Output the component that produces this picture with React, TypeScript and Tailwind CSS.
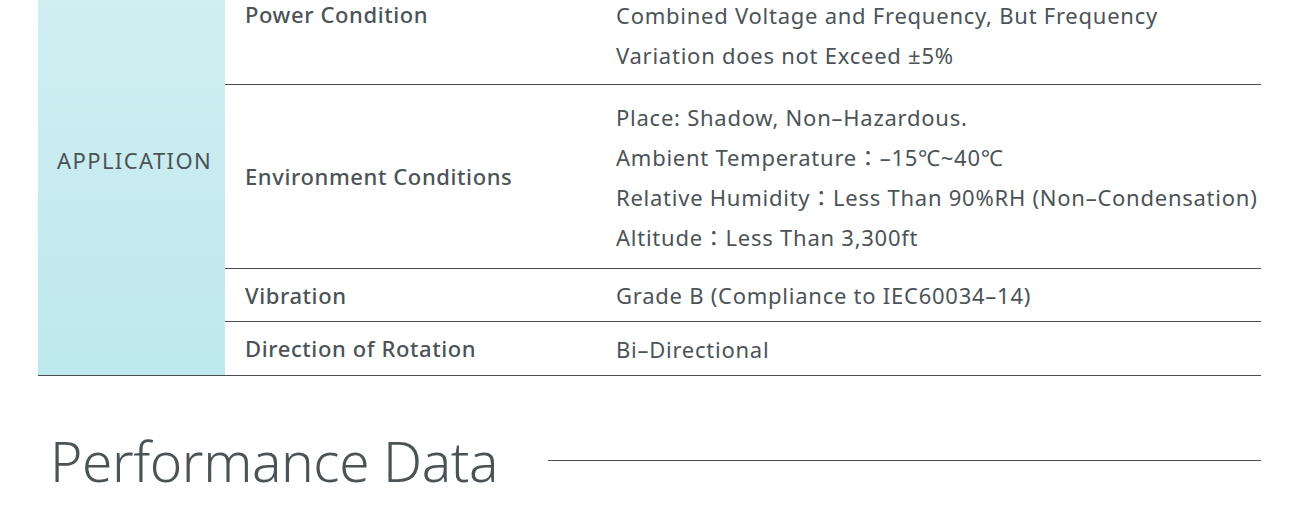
import React from 'react';

interface SpecRow {
    label: string;
    lines: string[];
    height: string;
    valuePad?: string;
    border?: boolean;
}

const rows: SpecRow[] = [
    {
        label: 'Power Condition',
        lines: ['Combined Voltage and Frequency, But Frequency', 'Variation does not Exceed ±5%'],
        height: 'h-[140px]',
        valuePad: 'pt-[50px] pb-[10px]',
        border: true,
    },
    {
        label: 'Environment Conditions',
        lines: [
            'Place: Shadow, Non–Hazardous.',
            'Ambient Temperature：–15℃~40℃',
            'Relative Humidity：Less Than 90%RH (Non–Condensation)',
            'Altitude：Less Than 3,300ft',
        ],
        height: 'h-[184px]',
        border: true,
    },
    {
        label: 'Vibration',
        lines: ['Grade B (Compliance to IEC60034–14)'],
        height: 'h-[53px]',
        border: true,
    },
    {
        label: 'Direction of Rotation',
        lines: ['Bi–Directional'],
        height: 'h-[53px]',
    },
];

export default function App() {
    return (
        <div
            className="w-full h-[513px] overflow-hidden bg-white text-[#4b5357]"
            style={{ fontFamily: '"Noto Sans", "Noto Sans CJK KR", sans-serif' }}
        >
            <div className="ml-[38px] w-[1223px] -mt-[55px] flex border-b border-[#4a4d50]">
                <div className="w-[187px] shrink-0 bg-gradient-to-b from-[#d4eff2] to-[#bde9ed] flex items-center pl-[19px] text-[22px] tracking-[1.4px]">
                    APPLICATION
                </div>
                <div className="flex-1">
                    {rows.map((row) => (
                        <div
                            key={row.label}
                            className={`flex items-center ${row.height} ${row.border ? 'border-b border-[#4a4d50]' : ''}`}
                        >
                            <div className="w-[391px] shrink-0 pl-[20px] text-[22px] tracking-[0.6px] font-medium">{row.label}</div>
                            <div className={`flex-1 whitespace-nowrap text-[22px] tracking-[0.75px] leading-[40px] ${row.valuePad ?? ''}`}>
                                {row.lines.map((line) => (
                                    <div key={line}>{line}</div>
                                ))}
                            </div>
                        </div>
                    ))}
                </div>
            </div>

            <div className="ml-[50px] w-[1211px] mt-[57px] flex items-center gap-[50px]">
                <h2 className="text-[55px] font-light leading-none tracking-[-0.4px]">Performance Data</h2>
                <div className="flex-1 h-px bg-[#4a4d50]" />
            </div>
        </div>
    );
}
